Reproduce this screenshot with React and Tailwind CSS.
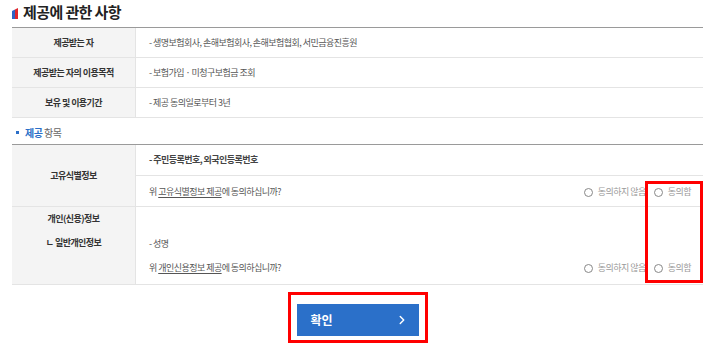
import { ChevronRight } from 'lucide-react'

function Radio({ label }) {
  return (
    <span className="flex items-center gap-[5px] text-[#9a9a9a]">
      <span className="w-[9px] h-[9px] rounded-full border border-[#888] bg-white" />
      <span>{label}</span>
    </span>
  )
}

function Agree() {
  return (
    <div className="flex items-center gap-[8px] pr-[12px]">
      <Radio label="동의하지 않음" />
      <Radio label="동의함" />
    </div>
  )
}

const infoRows = [
  { th: '제공받는 자', td: '- 생명보험회사, 손해보험회사, 손해보험협회, 서민금융진흥원' },
  { th: '제공받는 자의 이용목적', td: '- 보험가입 · 미청구보험금 조회' },
  { th: '보유 및 이용기간', td: '- 제공 동의일로부터 3년' },
]

export default function App() {
  return (
    <div className="relative w-[720px] h-[353px] overflow-hidden bg-white pl-[12px] pr-[17px] text-[9px] tracking-[-0.06em] text-[#555] font-['Noto_Sans_CJK_KR','Noto_Sans',sans-serif]">

      {/* 제공에 관한 사항 */}
      <div className="h-[27px] flex items-center gap-[5px] pb-[2px]">
        <svg width="6" height="11" viewBox="0 0 6 11" className="mt-[2px]">
          <polygon points="0,3 3,1.5 3,11 0,11" fill="#2e62c4" />
          <polygon points="3,1.5 6,0 6,11 3,11" fill="#e0262b" />
        </svg>
        <h1 className="text-[15px] font-bold text-[#222] tracking-[-0.04em]">제공에 관한 사항</h1>
      </div>

      <div className="border-t border-[#9a9a9a]">
        {infoRows.map(r => (
          <div key={r.th} className="flex h-[30px] border-b border-[#e4e4e4]">
            <div className="w-[124px] shrink-0 bg-[#f4f4f4] border-r border-[#e4e4e4] flex items-center justify-center font-bold text-[#333]">
              {r.th}
            </div>
            <div className="flex-1 flex items-center pl-[13px]">{r.td}</div>
          </div>
        ))}
      </div>

      {/* 제공 항목 */}
      <div className="h-[26px] flex items-center gap-[6px] pl-[4px] pt-[2px] text-[10px]">
        <span className="w-[3px] h-[3px] bg-[#2b6fc8]" />
        <span><span className="text-[#2b6fc8] font-bold">제공</span> <span className="text-[#666]">항목</span></span>
      </div>

      <div className="border-t border-[#9a9a9a]">
        <div className="flex border-b border-[#e4e4e4]">
          <div className="w-[124px] shrink-0 bg-[#f4f4f4] border-r border-[#e4e4e4] flex items-center justify-center font-bold text-[#333]">
            고유식별정보
          </div>
          <div className="flex-1">
            <div className="h-[31px] flex items-center pl-[13px] font-bold text-[#444] border-b border-[#e4e4e4]">
              - 주민등록번호, 외국인등록번호
            </div>
            <div className="h-[30px] flex items-center justify-between pl-[13px] pt-[2px]">
              <span>위 <span className="underline underline-offset-2">고유식별정보 제공</span>에 동의하십니까?</span>
              <Agree />
            </div>
          </div>
        </div>

        <div className="flex h-[78px] border-b border-[#e4e4e4]">
          <div className="w-[124px] shrink-0 bg-[#f4f4f4] border-r border-[#e4e4e4] flex flex-col items-center font-bold text-[#333]">
            <div className="h-[24px] flex items-center">개인(신용)정보</div>
            <div className="h-[24px] flex items-center">ㄴ 일반개인정보</div>
          </div>
          <div className="flex-1 pt-[25px]">
            <div className="h-[24px] flex items-center pl-[13px]">- 성명</div>
            <div className="h-[24px] flex items-center justify-between pl-[13px]">
              <span>위 <span className="underline underline-offset-2">개인신용정보 제공</span>에 동의하십니까?</span>
              <Agree />
            </div>
          </div>
        </div>
      </div>

      <div className="flex justify-center pt-[19px]">
        <button className="w-[122px] h-[32px] bg-[#2b70c9] text-white flex items-center justify-between pl-[14px] pr-[10px] text-[12px] font-bold tracking-normal">
          <span>확인</span>
          <ChevronRight size={14} strokeWidth={2.5} />
        </button>
      </div>

      {/* 강조 표시 */}
      <div className="absolute left-[645px] top-[181px] w-[58px] h-[102px] border-[3px] border-[#ff0000]" />
      <div className="absolute left-[288px] top-[292px] w-[140px] h-[51px] border-[3px] border-[#ff0000]" />
    </div>
  )
}
